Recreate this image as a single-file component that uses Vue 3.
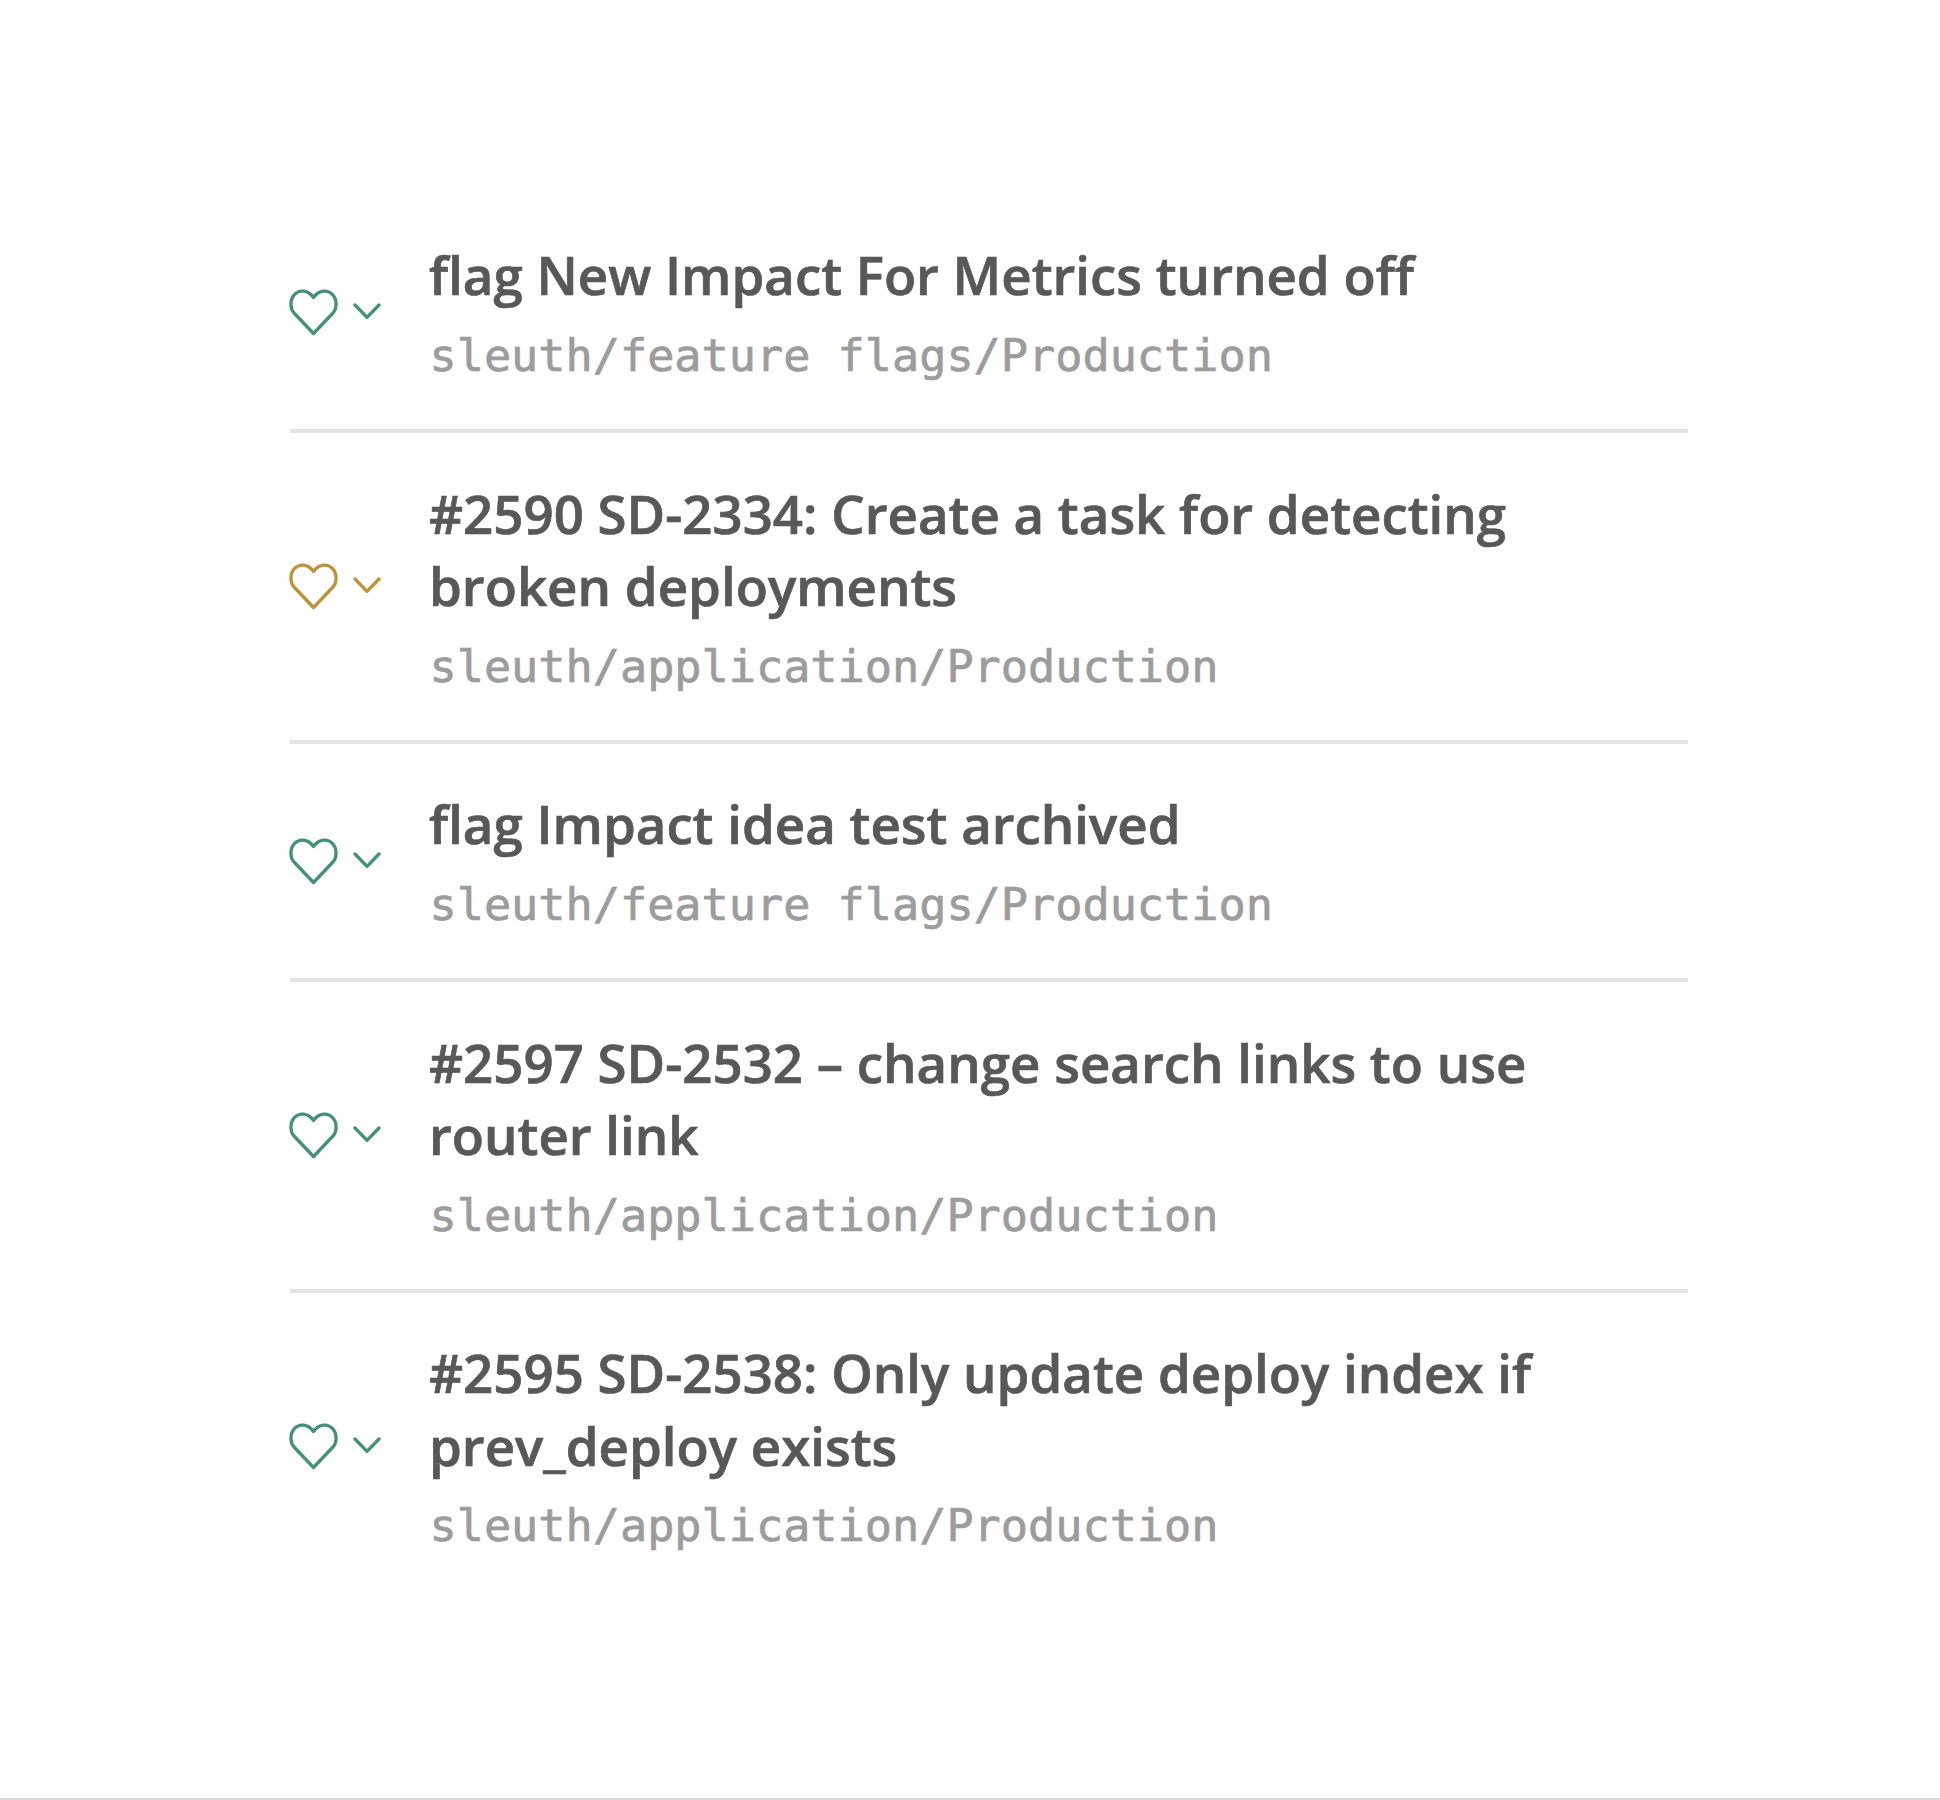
<template>
  <div class="page">
    <ul class="list">
      <li class="row" v-for="item in deploys" :key="item.title">
        <div class="health" :class="item.health">
          <svg class="heart" viewBox="0 0 50 48">
            <path d="M24.5 45.5 L5 25 C1 20.5 0.8 12 5 7 C10 1.3 19 1.5 24.5 9.5 C30 1.5 39 1.3 44 7 C48.2 12 48 20.5 44 25 Z" />
          </svg>
          <svg class="arrow" viewBox="0 0 28 18">
            <path d="M2 2 L14 14.3 L26 2" />
          </svg>
        </div>
        <div class="info">
          <div class="title">{{ item.title }}</div>
          <div class="path">{{ item.path }}</div>
        </div>
      </li>
    </ul>
  </div>
</template>
<script setup>
import { ref } from 'vue'
const deploys = ref([
  { title: 'flag New Impact For Metrics turned off', path: 'sleuth/feature flags/Production', health: 'good' },
  { title: '#2590 SD-2334: Create a task for detecting broken deployments', path: 'sleuth/application/Production', health: 'warn' },
  { title: 'flag Impact idea test archived', path: 'sleuth/feature flags/Production', health: 'good' },
  { title: '#2597 SD-2532 – change search links to use router link', path: 'sleuth/application/Production', health: 'good' },
  { title: '#2595 SD-2538: Only update deploy index if prev_deploy exists', path: 'sleuth/application/Production', health: 'good' }
])
</script>
<style>
body {
  margin: 0;
  background: #fefefe;
}
</style>
<style scoped>
.page {
  box-sizing: border-box;
  height: 1800px;
  padding: 195px 252px 0 290px;
  border-bottom: 2px solid #dcdcdc;
  background: #fefefe;
}
.list {
  margin: 0;
  padding: 0;
  list-style: none;
}
.row {
  display: flex;
  align-items: center;
  padding: 44.4px 0 39.2px;
  border-bottom: 4px solid #e3e3e3;
}
.row:last-child {
  border-bottom: none;
}
.health {
  display: flex;
  align-items: center;
  flex: none;
  width: 139px;
  margin-bottom: 6px;
}
.health svg {
  fill: none;
  stroke: currentColor;
  stroke-width: 3.3;
  stroke-linecap: round;
  stroke-linejoin: round;
}
.heart {
  width: 50px;
  height: 48px;
  margin-left: -1px;
}
.arrow {
  width: 28px;
  height: 18px;
  margin-left: 14px;
}
.good {
  color: #459079;
}
.warn {
  color: #bd9238;
}
.info {
  width: 1150px;
}
.title {
  font-family: "Open Sans", sans-serif;
  font-size: 52.8px;
  font-weight: 600;
  line-height: 72.6px;
  color: #585858;
  -webkit-text-stroke: 0.7px #585858;
}
.path {
  margin-top: 9px;
  padding-left: 0.5px;
  font-family: "DejaVu Sans Mono", monospace;
  font-size: 45.2px;
  line-height: 69px;
  color: #9c9c9c;
  white-space: nowrap;
  -webkit-text-stroke: 0.7px #9c9c9c;
}
</style>
